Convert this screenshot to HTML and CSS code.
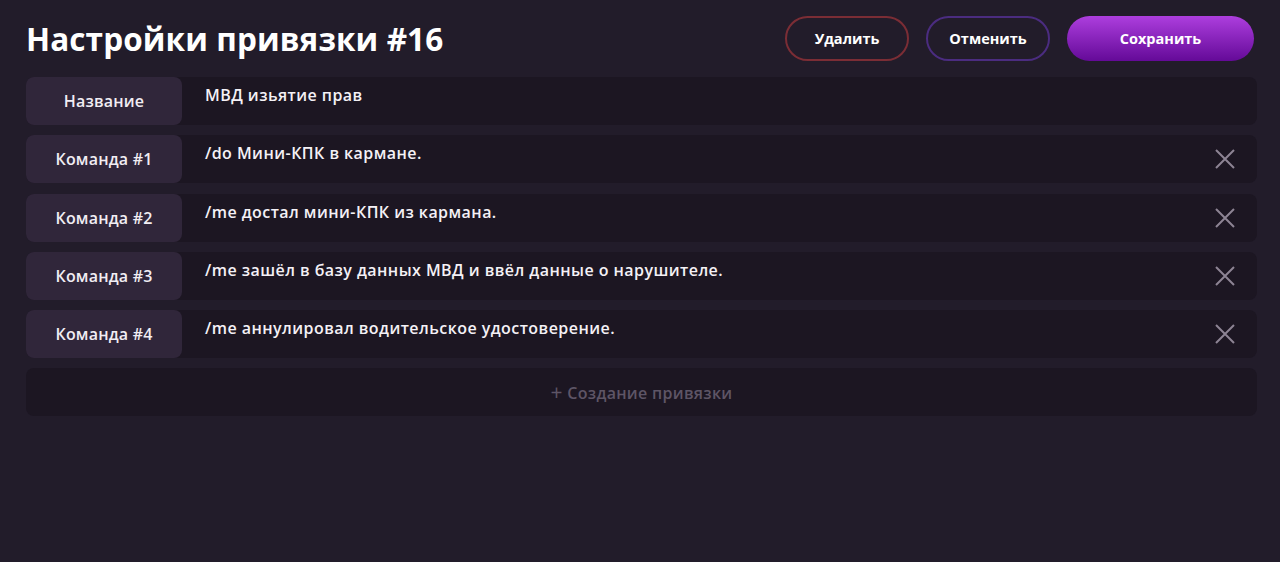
FILE: index.html
```html
<!DOCTYPE html>
<html lang="ru">
<head>
    <meta charset="UTF-8">
    <title>Настройки привязки #16</title>
    <link rel="stylesheet" href="styles.css">
</head>
<body>
    <div class="page">
        <!-- Header -->
        <div class="header">
            <h1>Настройки привязки #16</h1>
            <div class="actions">
                <button class="btn btn-delete">Удалить</button>
                <button class="btn btn-cancel">Отменить</button>
                <button class="btn btn-save">Сохранить</button>
            </div>
        </div>

        <!-- Fields -->
        <div class="rows">
            <div class="row">
                <div class="label">Название</div>
                <div class="value">МВД изьятие прав</div>
            </div>
            <div class="row">
                <div class="label">Команда #1</div>
                <div class="value">/do Мини-КПК в кармане.</div>
                <button class="remove"><svg width="20" height="20" viewBox="0 0 20 20"><path d="M1 1L19 19M19 1L1 19" stroke="currentColor" stroke-width="2"/></svg></button>
            </div>
            <div class="row">
                <div class="label">Команда #2</div>
                <div class="value">/me достал мини-КПК из кармана.</div>
                <button class="remove"><svg width="20" height="20" viewBox="0 0 20 20"><path d="M1 1L19 19M19 1L1 19" stroke="currentColor" stroke-width="2"/></svg></button>
            </div>
            <div class="row">
                <div class="label">Команда #3</div>
                <div class="value">/me зашёл в базу данных МВД и ввёл данные о нарушителе.</div>
                <button class="remove"><svg width="20" height="20" viewBox="0 0 20 20"><path d="M1 1L19 19M19 1L1 19" stroke="currentColor" stroke-width="2"/></svg></button>
            </div>
            <div class="row">
                <div class="label">Команда #4</div>
                <div class="value">/me аннулировал водительское удостоверение.</div>
                <button class="remove"><svg width="20" height="20" viewBox="0 0 20 20"><path d="M1 1L19 19M19 1L1 19" stroke="currentColor" stroke-width="2"/></svg></button>
            </div>
            <button class="add"><span class="plus">+</span> Создание привязки</button>
        </div>
    </div>
</body>
</html>
```

FILE: styles.css
```css
/* General */
body {
    margin: 0;
    background: #221c2a;
    font-family: 'Open Sans', 'Noto Sans', sans-serif;
    color: #f4f1f6;
}
.page {
    padding: 16px 26px 0 26px;
}

/* Header */
.header {
    display: flex;
    align-items: center;
    justify-content: space-between;
    height: 45px;
}
h1 {
    margin: 0;
    font-size: 31.5px;
    font-weight: 700;
    letter-spacing: 0.1px;
    color: #fff;
}
.actions {
    display: flex;
    gap: 17px;
}
.btn {
    height: 45px;
    border-radius: 23px;
    font-family: inherit;
    font-size: 14.5px;
    font-weight: 700;
    color: #fff;
    background: transparent;
    cursor: pointer;
}
.btn-delete {
    width: 124px;
    border: 2px solid #7b2d35;
}
.btn-cancel {
    width: 124px;
    border: 2px solid #4b2c80;
}
.btn-save {
    width: 187px;
    border: none;
    background: linear-gradient(#ad3ede, #640a98);
}

/* Rows */
.rows {
    display: flex;
    flex-direction: column;
    gap: 10.3px;
    margin-top: 16px;
    width: 1231px;
}
.row {
    display: flex;
    align-items: stretch;
    height: 48px;
    background: #1c1622;
    border-radius: 8px;
}
.label {
    width: 156px;
    flex-shrink: 0;
    display: flex;
    align-items: center;
    justify-content: center;
    background: #30263a;
    border-radius: 8px;
    font-size: 16px;
    font-weight: 600;
    letter-spacing: 0.2px;
    color: #f1edf3;
}
.value {
    flex: 1;
    padding: 7px 0 0 23px;
    font-size: 16px;
    font-weight: 600;
    letter-spacing: 0.45px;
    color: #f4f1f6;
}
.remove {
    width: 64px;
    border: none;
    background: transparent;
    color: #8d8494;
    display: flex;
    align-items: center;
    justify-content: center;
    padding: 0;
}
.add {
    height: 48px;
    border: none;
    border-radius: 8px;
    background: #1c1622;
    font-family: inherit;
    font-size: 16px;
    font-weight: 600;
    color: #5e5566;
    letter-spacing: 0.3px;
}
.plus {
    font-size: 21px;
    font-weight: 400;
    vertical-align: -1px;
}
```
